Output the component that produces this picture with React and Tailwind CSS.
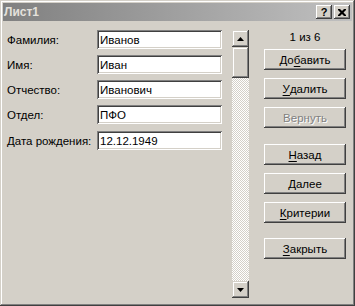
import React from "react";

const raisedBtn =
  "shadow-[inset_-1px_-1px_#404040,inset_1px_1px_#ffffff,inset_-2px_-2px_#808080,inset_2px_2px_#d4d0c8]";
const raisedWin =
  "shadow-[inset_-1px_-1px_#404040,inset_1px_1px_#d4d0c8,inset_-2px_-2px_#808080,inset_2px_2px_#ffffff]";
const sunken =
  "shadow-[inset_1px_1px_#808080,inset_-1px_-1px_#ffffff,inset_2px_2px_#404040,inset_-2px_-2px_#d4d0c8]";

const fields = [
  ["Фамилия:", "Иванов"],
  ["Имя:", "Иван"],
  ["Отчество:", "Иванович"],
  ["Отдел:", "ПФО"],
  ["Дата рождения:", "12.12.1949"],
];

function Btn({ children, className = "", disabled = false }) {
  return (
    <div
      className={`h-[21px] w-[82px] flex items-center justify-center bg-[#d4d0c8] ${raisedBtn} ${className} ${
        disabled
          ? "text-[#808080] [text-shadow:1px_1px_0_#ffffff]"
          : "text-black"
      }`}
    >
      {children}
    </div>
  );
}

function U({ children }) {
  return <span className="underline underline-offset-[2px]">{children}</span>;
}

export default function App() {
  return (
    <div
      className={`w-[355px] h-[306px] bg-[#d4d0c8] p-[3px] flex flex-col ${raisedWin} text-[11.5px] leading-[14px]`}
      style={{ fontFamily: '"Liberation Sans", Arial, sans-serif' }}
    >
      {/* Title bar */}
      <div className="h-[18px] flex items-center justify-between pl-[1px] pr-[2px] bg-[linear-gradient(to_right,#808080,#c0c0c0)]">
        <span className="font-bold text-[12px] text-[#e4e1dc]">Лист1</span>
        <div className="flex gap-[2px]">
          <div
            className={`w-[16px] h-[14px] bg-[#d4d0c8] ${raisedBtn} flex items-center justify-center font-bold text-[11px] leading-none text-black`}
          >
            ?
          </div>
          <div
            className={`w-[16px] h-[14px] bg-[#d4d0c8] ${raisedBtn} flex items-center justify-center`}
          >
            <svg width="8" height="7" viewBox="0 0 8 7">
              <path
                d="M0 0h2l2 2l2-2h2v1l-2.5 2.5L8 6v1H6L4 5L2 7H0V6l2.5-2.5L0 1z"
                fill="#000"
              />
            </svg>
          </div>
        </div>
      </div>

      {/* Body */}
      <div className="flex pt-[9px]">
        {/* Fields */}
        <div className="pl-[4px] w-[219px] flex flex-col gap-[6px]">
          {fields.map(([label, value], i) => (
            <div
              key={label}
              className={`h-[19px] flex items-center ${i === 4 ? "mt-[1px]" : ""}`}
            >
              <span className="flex-1 text-black">{label}</span>
              <div
                className={`w-[125px] h-[19px] bg-white ${sunken} flex items-center pl-[3px] text-black`}
              >
                {value}
              </div>
            </div>
          ))}
        </div>

        {/* Scrollbar */}
        <div className="ml-[10px] w-[17px] h-[268px] flex flex-col">
          <div
            className={`h-[17px] bg-[#d4d0c8] ${raisedWin} flex items-center justify-center`}
          >
            <svg width="7" height="4" viewBox="0 0 7 4">
              <path d="M3.5 0L7 4H0z" fill="#000" />
            </svg>
          </div>
          <div className={`h-[31px] bg-[#d4d0c8] ${raisedWin}`} />
          <div className="flex-1 bg-[repeating-conic-gradient(#ffffff_0%_25%,#d4d0c8_0%_50%)] bg-size-[2px_2px]" />
          <div
            className={`h-[17px] bg-[#d4d0c8] ${raisedWin} flex items-center justify-center`}
          >
            <svg width="7" height="4" viewBox="0 0 7 4">
              <path d="M0 0H7L3.5 4z" fill="#000" />
            </svg>
          </div>
        </div>

        {/* Buttons */}
        <div className="ml-[15px] w-[82px] flex flex-col">
          <div className="h-[14px] text-center text-black">1 из 6</div>
          <Btn className="mt-[5px]">
            До<U>б</U>авить
          </Btn>
          <Btn className="mt-[8px]">
            <U>У</U>далить
          </Btn>
          <Btn className="mt-[8px]" disabled>
            Вернуть
          </Btn>
          <Btn className="mt-[16px]">
            <U>Н</U>азад
          </Btn>
          <Btn className="mt-[8px]">
            <U>Д</U>алее
          </Btn>
          <Btn className="mt-[8px]">
            <U>К</U>ритерии
          </Btn>
          <Btn className="mt-[15px]">
            <U>З</U>акрыть
          </Btn>
        </div>
      </div>
    </div>
  );
}
